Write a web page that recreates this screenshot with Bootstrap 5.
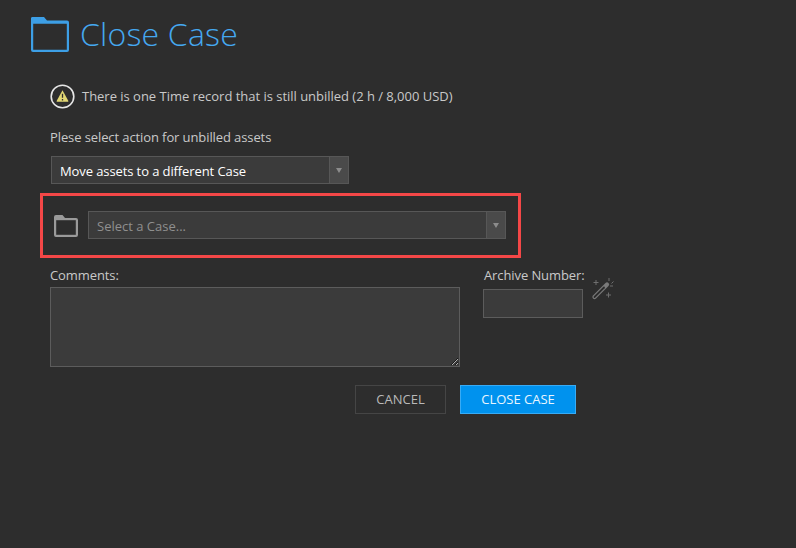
<!DOCTYPE html>
<html lang="en">
<head>
<meta charset="utf-8">
<title>Close Case</title>
<link href="https://cdn.jsdelivr.net/npm/bootstrap@5.3.0/dist/css/bootstrap.min.css" rel="stylesheet">
<style>
html,body{height:100%}
body{background:#2d2d2d;color:#c9c9c9;font-family:"Open Sans","Noto Sans",sans-serif;font-size:13px;line-height:18px;letter-spacing:-.1px}
.page-wrap{width:796px;height:548px;overflow:hidden;padding:15px 0 0 31px}
.head-title{font-weight:300;font-size:32px;line-height:38px;color:#45a8f0;margin:0 0 0 11px;letter-spacing:.2px}
.main-col{padding-left:19px;width:620px}
.notice{margin-top:30px;height:26px}
.notice-text{margin-left:7px;letter-spacing:-.02px}
.act-label{margin-top:19px;height:19px}
.combo{display:flex;height:28px;background:#3b3b3b;border:1px solid #575757}
.combo-text{flex:1;padding:0 8px;line-height:28px}
.combo-btn{width:19px;background:#4a4a4a;border-left:1px solid #575757;display:flex;align-items:center;justify-content:center}
.combo-one{width:298px;margin:9px 0 0 1px;color:#fff;font-weight:500}
.combo-two{flex:1;color:#8f8f8f;letter-spacing:0}
.red-box{width:481px;height:65px;margin:9px 0 0 -10px;border:3px solid #f44747;padding:15px 12px 0 11px;gap:10px}
.form-zone{margin-top:8px;gap:23px}
.comm-col{width:410px}
.field-label{height:21px;line-height:18px}
.field-box{background:#3b3b3b;border:1px solid #5c5c5c;border-radius:0;display:block}
.comm-area{width:410px;height:80px;margin-top:0;resize:both;color:#ddd;outline:0}
.arch-col{width:150px}
.arch-input{width:100px;height:29px;margin-top:2px;color:#ddd;outline:0}
.wand-slot{margin:11px 0 0 7px}
.act-row{margin:18px 0 0 305px;gap:14px}
.act-btn{height:29px;border-radius:0;font-size:13px;line-height:18px;padding:0 0 2px;letter-spacing:0}
.btn-cancel{width:91px;color:#b9b9b9;background:transparent;border:1px solid #454545}
.btn-close-case{width:116px;color:#e8f5ff;background:#0092ee;border:1px solid #38abf5}
.arch-name{margin-left:1px}
</style>
</head>
<body>
<div class="page-wrap">
  <div class="d-flex align-items-center">
    <svg width="38" height="35" viewBox="0 0 38 35" fill="none">
      <path d="M0 3a2 2 0 0 1 2-3h11l3 3.500h20a2 2 0 0 1 2 2V33a2 2 0 0 1-2 2H2a2 2 0 0 1-2-2z" fill="#3d9fe6"/>
      <path d="M2.200 6.800h33.600v26H2.200z" fill="#2d2d2d"/>
    </svg>
    <h1 class="head-title">Close Case</h1>
  </div>
  <div class="main-col">
    <div class="notice d-flex align-items-center">
      <svg width="25" height="25" viewBox="0 0 25 25" fill="none">
        <circle cx="12.500" cy="12.500" r="11.300" stroke="#e6e6e6" stroke-width="1.600"/>
        <path d="M12.500 6.200 18.400 17a.6.6 0 0 1-.5.8H7.100a.6.6 0 0 1-.5-.8z" fill="#e2d774"/>
        <path d="M12.500 9.800v4M12.500 15v1.400" stroke="#2d2d2d" stroke-width="1.300"/>
      </svg>
      <span class="notice-text">There is one Time record that is still unbilled (2 h / 8,000 USD)</span>
    </div>
    <div class="act-label">Plese select action for unbilled assets</div>
    <div class="combo combo-one">
      <div class="combo-text">Move assets to a different Case</div>
      <div class="combo-btn"><svg width="6" height="5" viewBox="0 0 6 5"><path d="M0 0h6L3 5z" fill="#8c8c8c"/></svg></div>
    </div>
    <div class="red-box d-flex">
      <svg class="mt-1" width="24" height="22" viewBox="0 0 24 22" fill="none">
        <path d="M0 2a2 2 0 0 1 2-2h6.500l2.500 3h11a2 2 0 0 1 2 2v15a2 2 0 0 1-2 2H2a2 2 0 0 1-2-2z" fill="#9a9a9a"/>
        <path d="M2.200 5.200h19.600v14.600H2.200z" fill="#2d2d2d"/>
      </svg>
      <div class="combo combo-two">
        <div class="combo-text">Select a Case...</div>
        <div class="combo-btn"><svg width="6" height="5" viewBox="0 0 6 5"><path d="M0 0h6L3 5z" fill="#8c8c8c"/></svg></div>
      </div>
    </div>
    <div class="form-zone d-flex">
      <div class="comm-col">
        <div class="field-label">Comments:</div>
        <textarea class="field-box comm-area" aria-label="Comments"></textarea>
      </div>
      <div class="arch-col">
        <div class="d-flex">
          <div>
            <div class="field-label arch-name">Archive Number:</div>
            <input class="field-box arch-input" type="text" aria-label="Archive Number">
          </div>
          <svg class="wand-slot" width="24" height="24" viewBox="0 0 24 24" fill="none">
            <path d="M3.500 20 16 7.500" stroke="#7a7a7a" stroke-width="4.200" stroke-linecap="round"/>
            <path d="M3.500 20 13 10.500" stroke="#2d2d2d" stroke-width="1.800" stroke-linecap="round"/>
            <path d="M18 1v3M20.500 6.500l2-2M22 9h-3M5 3v5M2.500 5.500h5M17.500 15.500v5M15 18h5" stroke="#6f6f6f" stroke-width="1"/>
          </svg>
        </div>
      </div>
    </div>
    <div class="act-row d-flex">
      <button type="button" class="btn act-btn btn-cancel">CANCEL</button>
      <button type="button" class="btn act-btn btn-close-case">CLOSE CASE</button>
    </div>
  </div>
</div>
<script src="https://cdn.jsdelivr.net/npm/bootstrap@5.3.0/dist/js/bootstrap.bundle.min.js"></script>
</body>
</html>
